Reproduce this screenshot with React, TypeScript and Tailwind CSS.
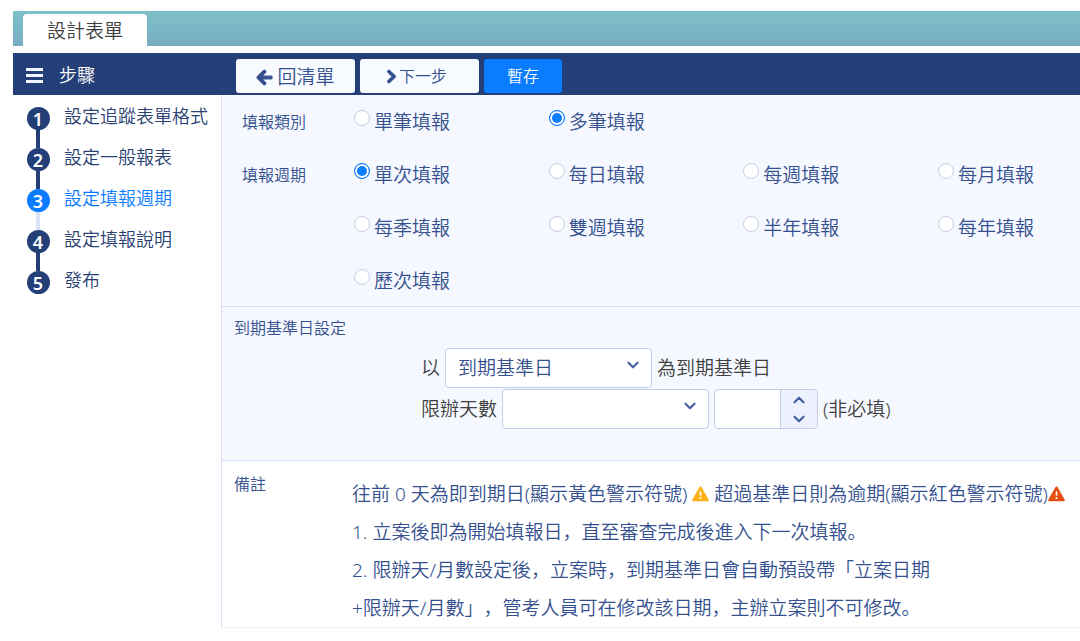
import React, { useState } from "react";
import { ChevronDown, ChevronUp } from "lucide-react";
import { FaArrowLeft, FaChevronRight } from "react-icons/fa";

const steps = ["設定追蹤表單格式", "設定一般報表", "設定填報週期", "設定填報說明", "發布"];

const categories = ["單筆填報", "多筆填報"];

const periods = [
  "單次填報",
  "每日填報",
  "每週填報",
  "每月填報",
  "每季填報",
  "雙週填報",
  "半年填報",
  "每年填報",
  "歷次填報",
];

const MenuIcon = () => (
  <svg width="17" height="15" viewBox="0 0 17 15" fill="currentColor" aria-hidden="true">
    <rect x="0" y="0" width="17" height="3" />
    <rect x="0" y="6" width="17" height="3" />
    <rect x="0" y="12" width="17" height="3" />
  </svg>
);

const WarningIcon = ({ className }: { className: string }) => (
  <svg
    width="17"
    height="16"
    viewBox="0 0 17 16"
    className={`inline-block align-[-1px] ${className}`}
    aria-hidden="true"
  >
    <path
      d="M7.5 1a1.15 1.15 0 0 1 2 0l7.1 12.6a1 1 0 0 1-.9 1.6H1.3a1 1 0 0 1-.9-1.6z"
      fill="currentColor"
    />
    <path d="M8.5 5.4v4.2" stroke="#fff" strokeWidth="1.7" />
    <rect x="7.6" y="11.2" width="1.8" height="1.8" fill="#fff" />
  </svg>
);

type RadioRowProps = {
  name: string;
  legend: string;
  options: string[];
  value: string;
  onChange: (value: string) => void;
};

const RadioRow = ({ name, legend, options, value, onChange }: RadioRowProps) => (
  <div role="radiogroup" aria-labelledby={`${name}-legend`} className="flex leading-7">
    <span id={`${name}-legend`} className="w-28 shrink-0 text-base leading-7">
      {legend}
    </span>
    <div className="grid flex-1 grid-cols-[1fr_1fr_1fr_142px] gap-y-[25px]">
      {options.map((option) => (
        <label key={option} className="flex items-start gap-1 text-[19px] leading-7">
          <input
            type="radio"
            name={name}
            value={option}
            checked={value === option}
            onChange={() => onChange(option)}
            className="mt-0.5 size-4 shrink-0 appearance-none rounded-full border border-[#c6cde4] bg-white checked:border-[#0a7cff] checked:bg-[#0a7cff] checked:shadow-[inset_0_0_0_2px_white]"
          />
          {option}
        </label>
      ))}
    </div>
  </div>
);

type SelectBoxProps = {
  id: string;
  options: string[];
};

const SelectBox = ({ id, options }: SelectBoxProps) => (
  <div className="relative h-10 w-[207px]">
    <select
      id={id}
      className="h-full w-full appearance-none rounded border border-[#c3cdea] bg-white pr-9 pl-3 text-[19px] text-[#34508e]"
    >
      {options.map((option) => (
        <option key={option}>{option}</option>
      ))}
    </select>
    <ChevronDown
      size={18}
      strokeWidth={3}
      className="pointer-events-none absolute top-2 right-[10px] text-[#46629f]"
    />
  </div>
);

const Sidebar = () => {
  const current = 2;

  return (
    <aside className="w-52 shrink-0">
      <div className="flex h-[42px] items-center gap-4 bg-[#243e77] pt-0.5 pl-[13px] text-white">
        <button type="button" aria-label="選單" className="text-[#f2f6ff]">
          <MenuIcon />
        </button>
        <h2 className="text-lg">步驟</h2>
      </div>
      <ol className="pt-3 pl-[13px]">
        {steps.map((step, i) => (
          <li key={step} className="flex gap-[14px]">
            <div className="flex h-[41px] w-6 flex-col items-center">
              <span
                className={`flex size-[23px] shrink-0 items-center justify-center rounded-full text-lg font-semibold text-white ${
                  i === current ? "bg-[#0a7cff]" : "bg-[#243e77]"
                }`}
              >
                {i + 1}
              </span>
              {i < steps.length - 1 && (
                <span className={`w-1 flex-1 ${i === current ? "bg-[#dde3f5]" : "bg-[#243e77]"}`} />
              )}
            </div>
            <a
              href="#"
              className={`text-lg leading-[18px] ${i === current ? "text-[#0a7cff]" : "text-[#2a3f72]"}`}
            >
              {step}
            </a>
          </li>
        ))}
      </ol>
    </aside>
  );
};

const Toolbar = () => (
  <div className="flex h-[42px] items-center gap-[5px] bg-[#243e77] pt-1 pl-[15px]">
    <button
      type="button"
      className="flex h-[34px] w-[119px] items-center justify-center gap-1 rounded-[3px] bg-[#f7faff] pt-0.5 text-[19px] text-[#34508e]"
    >
      <FaArrowLeft size={17} stroke="currentColor" strokeWidth={40} />
      回清單
    </button>
    <button
      type="button"
      className="flex h-[34px] w-[119px] items-center justify-center rounded-[3px] bg-[#f7faff] pr-2 text-base text-[#34508e]"
    >
      <FaChevronRight size={15} stroke="currentColor" strokeWidth={40} />
      下一步
    </button>
    <button type="button" className="h-[34px] w-[78px] rounded-[3px] bg-[#0a7cff] text-base text-white">
      暫存
    </button>
  </div>
);

const App = () => {
  const [category, setCategory] = useState("多筆填報");
  const [period, setPeriod] = useState("單次填報");
  const [days, setDays] = useState("");

  const step = (amount: number) => setDays(String(Math.max(0, Number(days) + amount)));

  return (
    <div className="min-h-screen bg-white pt-[11px] pl-[13px] font-['Noto_Sans','Noto_Sans_CJK_SC',sans-serif] font-[350] text-[#34508e]">
      <header className="flex items-end bg-linear-to-b from-[#7dc0c8] to-[#76adc1] pt-[3px] pl-[10px]">
        <h1 className="flex h-8 w-[124px] items-center justify-center rounded-t bg-white pt-0.5 text-[19px] text-[#404040]">
          設計表單
        </h1>
      </header>

      <div className="mt-[7px] flex">
        <Sidebar />
        <main className="min-w-0 flex-1">
          <Toolbar />
          <div className="border-l border-[#d9def3]">
            <section className="flex flex-col gap-[25px] border-b border-[#d5ddf2] bg-[#f5f8ff] pt-[13px] pb-[11px] pl-5">
              <RadioRow
                name="category"
                legend="填報類別"
                options={categories}
                value={category}
                onChange={setCategory}
              />
              <RadioRow
                name="period"
                legend="填報週期"
                options={periods}
                value={period}
                onChange={setPeriod}
              />
            </section>

            <section className="border-b border-[#d5ddf2] bg-[#f5f8ff] pt-[9px] pb-[31px] pl-3">
              <h3 className="text-base leading-6">到期基準日設定</h3>
              <div className="mt-2 flex flex-col gap-px pl-[187px] text-[19px] text-[#404040]">
                <div className="flex items-center gap-[5px]">
                  <label htmlFor="base-date">以</label>
                  <SelectBox id="base-date" options={["到期基準日"]} />
                  <span>為到期基準日</span>
                </div>
                <div className="flex items-center gap-[5px]">
                  <label htmlFor="limit-type">限辦天數</label>
                  <SelectBox id="limit-type" options={["", "天", "月"]} />
                  <div className="flex h-10 w-[104px] overflow-hidden rounded border border-[#c3cdea] bg-white">
                    <input
                      type="text"
                      inputMode="numeric"
                      aria-label="天數"
                      value={days}
                      onChange={(e) => setDays(e.target.value.replace(/\D/g, ""))}
                      className="min-w-0 flex-1 px-2 text-[#34508e]"
                    />
                    <div className="flex w-[37px] flex-col border-l border-[#c3cdea] bg-[#edf1fe] text-[#46629f]">
                      <button
                        type="button"
                        aria-label="增加"
                        onClick={() => step(1)}
                        className="flex flex-1 items-center justify-center"
                      >
                        <ChevronUp size={18} strokeWidth={3} />
                      </button>
                      <button
                        type="button"
                        aria-label="減少"
                        onClick={() => step(-1)}
                        className="flex flex-1 items-center justify-center"
                      >
                        <ChevronDown size={18} strokeWidth={3} />
                      </button>
                    </div>
                  </div>
                  <span>(非必填)</span>
                </div>
              </div>
            </section>

            <section className="flex border-b border-[#f0f3f8] pt-[11px] pl-3">
              <h3 className="w-[118px] shrink-0 text-base leading-6">備註</h3>
              <div className="pt-[3px] text-[19px] leading-[38px] whitespace-nowrap [text-spacing-trim:space-all]">
                <p>
                  往前 0 天為即到期日(顯示黃色警示符號) <WarningIcon className="text-[#fdb219]" />{" "}
                  超過基準日則為逾期(顯示紅色警示符號)
                  <WarningIcon className="text-[#e34f12]" />
                </p>
                <p>1. 立案後即為開始填報日，直至審查完成後進入下一次填報。</p>
                <p>
                  2. 限辦天/月數設定後，立案時，到期基準日會自動預設帶「立案日期
                  <br />
                  +限辦天/月數」，管考人員可在修改該日期，主辦立案則不可修改。
                </p>
              </div>
            </section>
          </div>
        </main>
      </div>
    </div>
  );
};

export default App;
